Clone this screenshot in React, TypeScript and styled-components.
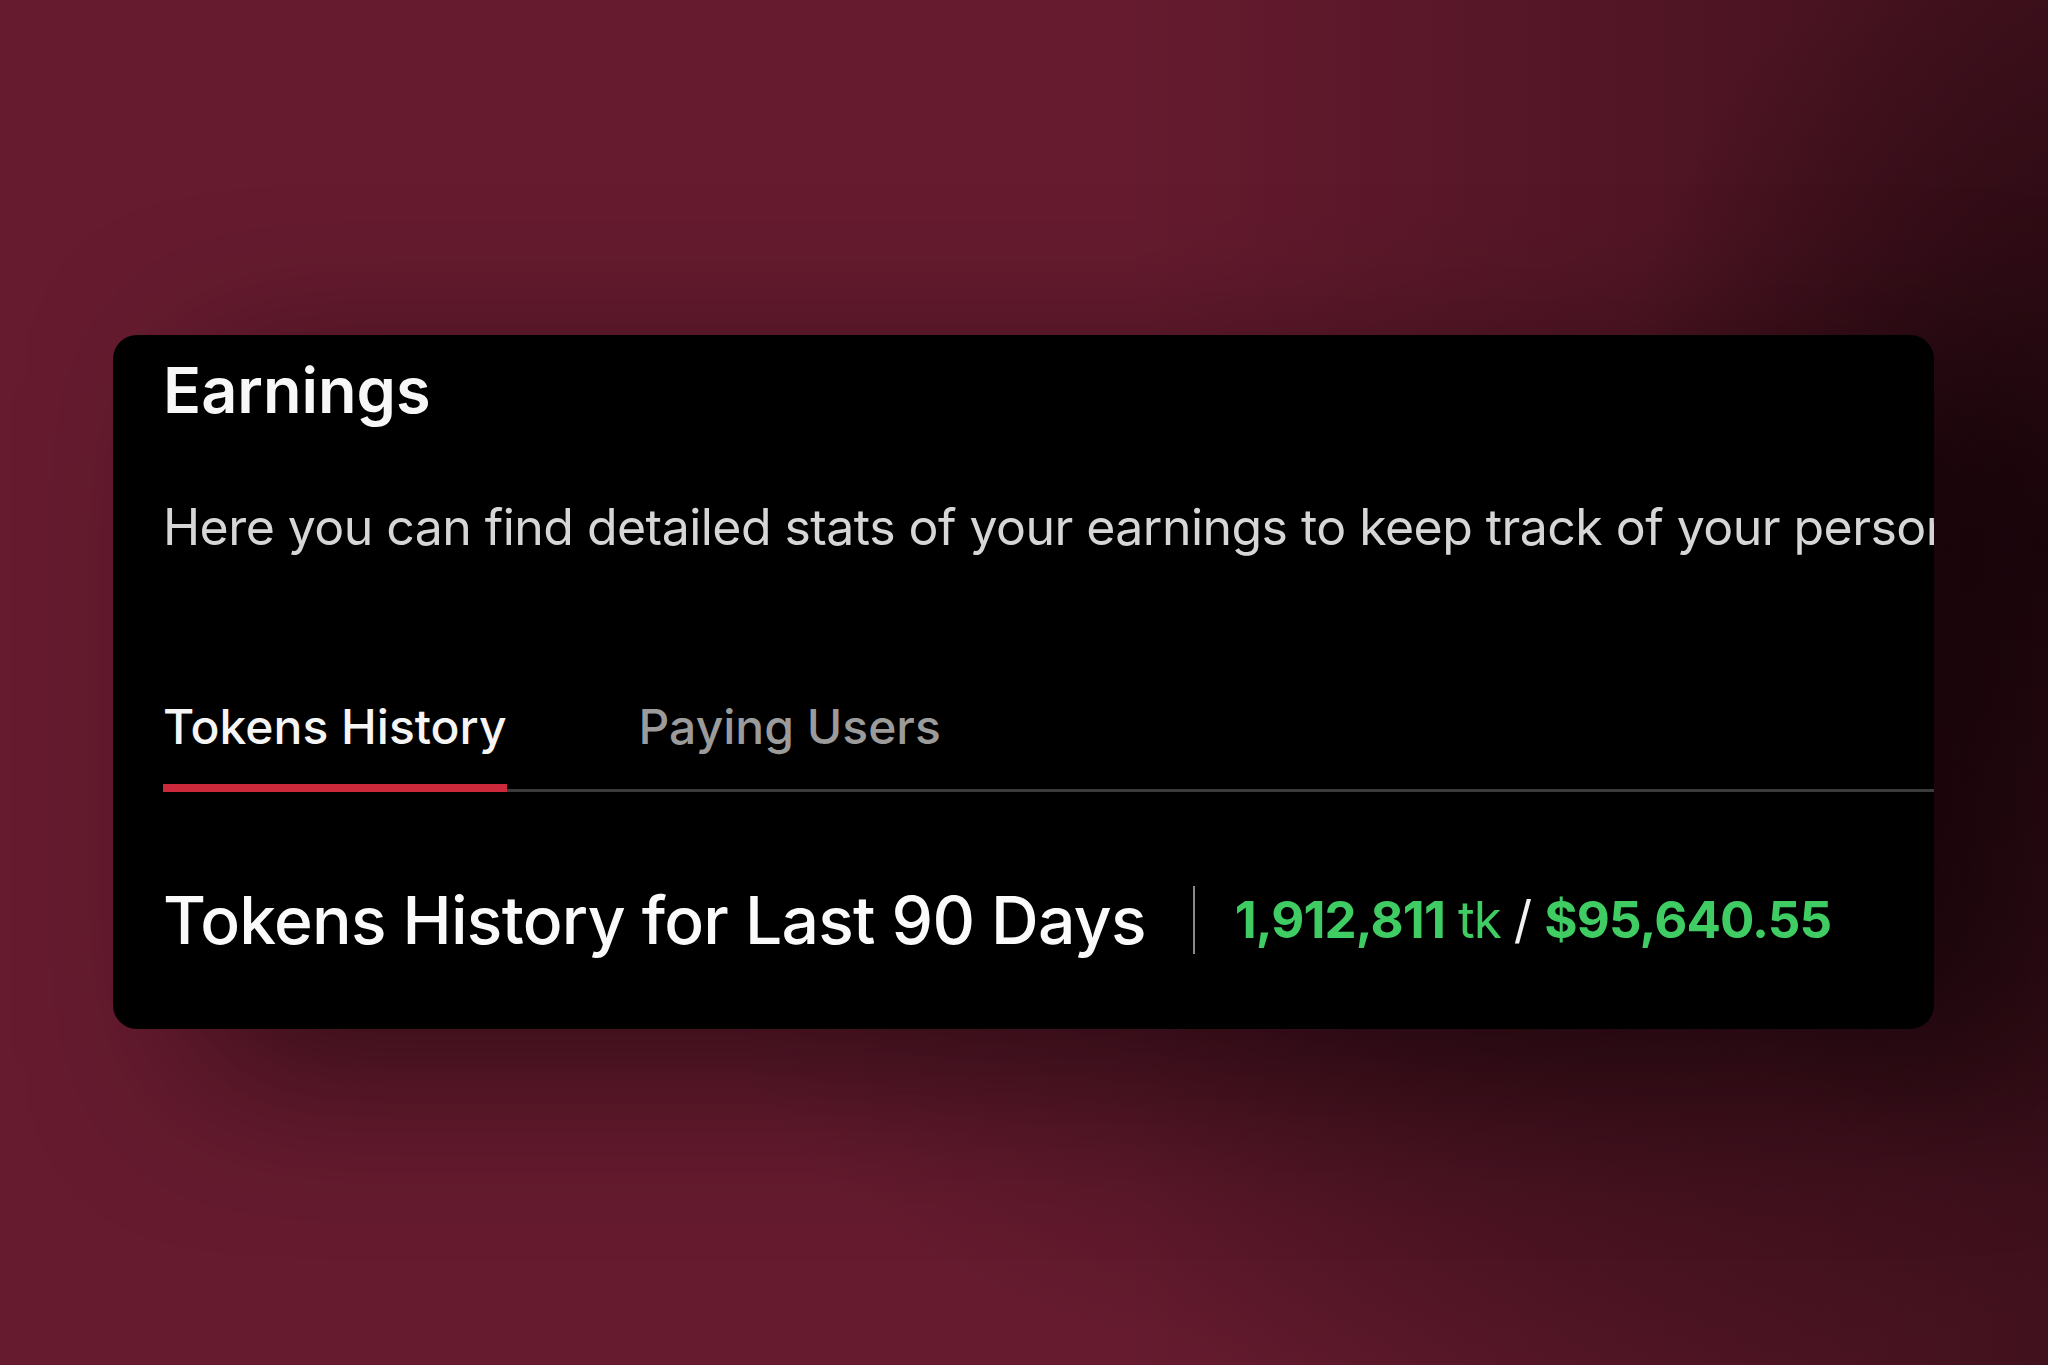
import styled, { createGlobalStyle } from "styled-components";

const GlobalStyle = createGlobalStyle`
  html, body {
    margin: 0;
    padding: 0;
  }

  body {
    font-family: Inter, "Noto Sans", sans-serif;
    background: #661b2f;
  }
`;

export default function App() {
  return (
    <>
      <GlobalStyle />
      <Page>
        <Card>
          <Title>Earnings</Title>
          <Description>
            Here you can find detailed stats of your earnings to keep track of
            your personal income and the users who pay you the most.
          </Description>
          <TabBar>
            <Tab $active>Tokens History</Tab>
            <Tab>Paying Users</Tab>
          </TabBar>
          <Summary>
            <SummaryTitle>Tokens History for Last 90 Days</SummaryTitle>
            <Divider />
            <Totals>
              <Strong>1,912,811</Strong>
              <Unit>tk</Unit>
              <Slash>/</Slash>
              <Strong>$95,640.55</Strong>
            </Totals>
          </Summary>
        </Card>
      </Page>
    </>
  );
}

const Page = styled.main`
  min-height: 100vh;
  box-sizing: border-box;
  padding: 335px 114px 0 113px;
  background:
    radial-gradient(ellipse 22% 48% at 100% 40%, rgba(20, 4, 8, 0.78), transparent 100%),
    radial-gradient(ellipse 40% 30% at 75% 72%, rgba(20, 4, 8, 0.45), transparent 100%),
    linear-gradient(90deg, rgba(0, 0, 0, 0) 55%, rgba(20, 4, 8, 0.45) 100%),
    #661b2f;
`;

const Card = styled.section`
  background: #000;
  border-radius: 24px;
  overflow: hidden;
  padding: 18px 0 69px 50px;
  color: #fff;
  box-shadow: 90px 40px 160px rgba(10, 2, 4, 0.55);
`;

const Title = styled.h1`
  margin: 0;
  font-size: 63px;
  line-height: 74px;
  font-weight: 600;
  letter-spacing: 0;
  color: #f7f7f7;
`;

const Description = styled.p`
  margin: 70px 0 0;
  font-size: 50px;
  line-height: 60px;
  font-weight: 400;
  letter-spacing: -0.55px;
  color: #d6d6d6;
  white-space: nowrap;
`;

const TabBar = styled.nav`
  display: flex;
  gap: 132px;
  margin-top: 141px;
  border-bottom: 3px solid #3b3b3b;
`;

const Tab = styled.div<{ $active?: boolean }>`
  padding-bottom: 28px;
  margin-bottom: -3px;
  font-size: 48px;
  line-height: 58px;
  font-weight: 500;
  color: ${(p) => (p.$active ? "#f5f5f5" : "#9b9b9b")};
  border-bottom: 8px solid ${(p) => (p.$active ? "#cc2a3b" : "transparent")};
`;

const Summary = styled.div`
  display: flex;
  align-items: center;
  margin-top: 88px;
`;

const SummaryTitle = styled.h2`
  margin: 0;
  font-size: 66px;
  line-height: 80px;
  font-weight: 500;
  letter-spacing: -0.75px;
  color: #fafafa;
`;

const Divider = styled.span`
  width: 2px;
  height: 68px;
  margin: 0 40px 0 47px;
  background: #8a8a8a;
`;

const Totals = styled.div`
  display: flex;
  align-items: baseline;
  gap: 13px;
  font-size: 51px;
  line-height: 62px;
  letter-spacing: -0.9px;
  color: #3fcc63;
`;

const Strong = styled.span`
  font-weight: 700;
`;

const Unit = styled.span`
  font-weight: 400;
`;

const Slash = styled.span`
  color: #f2f2f2;
  font-weight: 400;
`;
